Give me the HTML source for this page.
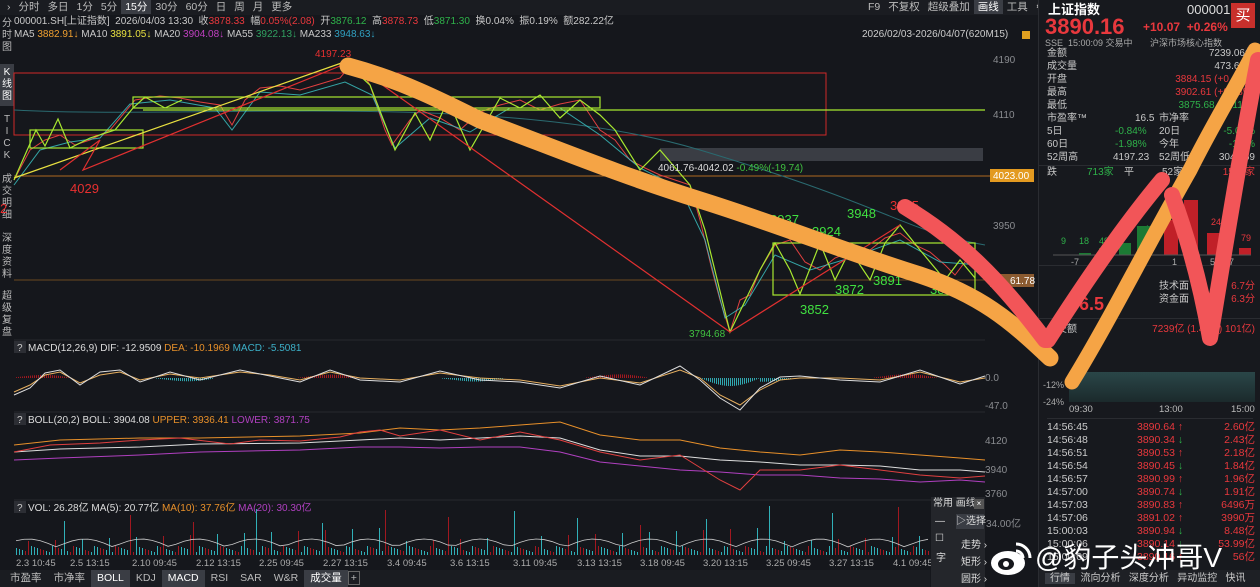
<!DOCTYPE html>
<html><head><meta charset="utf-8"><style>
*{margin:0;padding:0;box-sizing:border-box}
body{width:1260px;height:587px;background:#15171c;font-family:"Liberation Sans","Noto Sans CJK SC",sans-serif;color:#c8c8c8;overflow:hidden;position:relative;font-size:10px}
.a{position:absolute;white-space:nowrap}
.r{color:#e8383d}.g{color:#2fb24a}.w{color:#ddd}
.tab{display:inline-block;padding:0 4px;line-height:14px;font-size:10.5px;color:#bbb}
.side{position:absolute;left:0;width:14px;font-size:10px;line-height:12px;text-align:center;color:#bbb}
.rp{position:absolute;left:1038px;top:0;width:222px;height:587px;background:#17191e;border-left:1px solid #2a2c31}
.row{position:absolute;left:8px;width:210px;font-size:10px;height:13px;line-height:13px}
.row span{position:absolute}
.bt{display:inline-block;padding:0 6px;line-height:17px;font-size:10.5px;color:#bbb}
</style></head><body>
<div class="a" style="left:0;top:0;width:1038px;height:15px;background:#1a1c21"></div>
<div class="a" style="left:3px;top:0"><span class="tab">›</span><span class="tab">分时</span><span class="tab">多日</span><span class="tab">1分</span><span class="tab">5分</span><span class="tab" style="background:#3a3d44;color:#fff">15分</span><span class="tab">30分</span><span class="tab">60分</span><span class="tab">日</span><span class="tab">周</span><span class="tab">月</span><span class="tab">更多</span></div>
<div class="a" style="left:864px;top:0"><span class="tab">F9</span><span class="tab">不复权</span><span class="tab">超级叠加</span><span class="tab" style="background:#3a3d44;color:#fff">画线</span><span class="tab">工具</span><span class="tab">⚙</span><span class="tab">›</span></div>
<div class="a" style="left:14px;top:15px;font-size:10px;line-height:14px">000001.SH[上证指数] &nbsp;2026/04/03 13:30 &nbsp;收<span class="r">3878.33</span> &nbsp;幅<span class="r">0.05%(2.08)</span> &nbsp;开<span class="g">3876.12</span> &nbsp;高<span class="r">3878.73</span> &nbsp;低<span class="g">3871.30</span> &nbsp;换0.04% &nbsp;振0.19% &nbsp;额282.22亿</div>
<div class="a" style="left:14px;top:28px;font-size:10px;line-height:14px">MA5 <span style="color:#f0a030">3882.91↓</span> MA10 <span style="color:#e8e040">3891.05↓</span> MA20 <span style="color:#c040c0">3904.08↓</span> MA55 <span style="color:#30a060">3922.13↓</span> MA233 <span style="color:#30a0c0">3948.63↓</span></div>
<div class="a" style="left:862px;top:28px;font-size:10px;line-height:14px;color:#ccc">2026/02/03-2026/04/07(620M15)</div>
<div class="a" style="left:1022px;top:31px;width:8px;height:8px;background:#e0a020"></div>
<div class="side" style="top:18px">分<br>时<br>图</div>
<div class="side" style="top:64px;background:#3a3d44;color:#fff;height:42px;padding-top:3px">K<br>线<br>图</div>
<div class="side" style="top:114px">T<br>I<br>C<br>K</div>
<div class="side" style="top:174px">成<br>交<br>明<br>细</div>
<div class="side" style="top:233px">深<br>度<br>资<br>料</div>
<div class="side" style="top:291px">超<br>级<br>复<br>盘</div>

<svg class="a" style="left:0;top:0" width="1038" height="587">
<g stroke="#26282e" stroke-width="1">
<line x1="14" y1="340" x2="985" y2="340"/><line x1="14" y1="412" x2="985" y2="412"/><line x1="14" y1="500" x2="985" y2="500"/>
</g>
<g fill="#8a8c90" font-size="10" font-family="Liberation Sans">
<text x="993" y="63">4190</text><text x="993" y="118">4110</text><text x="993" y="229">3950</text>
<text x="985" y="381">0.0</text><text x="985" y="409">-47.0</text>
<text x="985" y="444">4120</text><text x="985" y="473">3940</text><text x="985" y="497">3760</text>
<text x="986" y="527">34.00亿</text>
</g>
<rect x="14" y="73" width="812" height="62" fill="none" stroke="#d02828" stroke-width="1"/>
<rect x="660" y="148" width="323" height="13" fill="#3a3d44"/>
<line x1="14" y1="176" x2="990" y2="176" stroke="#b06a20" stroke-width="1"/>
<line x1="14" y1="280" x2="990" y2="280" stroke="#6a4a20" stroke-width="1"/>
<rect x="990" y="169" width="44" height="13" fill="#e39a20"/>
<text x="993" y="179" fill="#fff" font-size="10" font-family="Liberation Sans">4023.00</text>
<rect x="990" y="274" width="44" height="13" fill="#8a5a30"/>
<text x="1010" y="284" fill="#fff" font-size="10" font-family="Liberation Sans">61.78</text>
<path d="M14,110 C200,120 500,90 700,150 S900,230 985,245" fill="none" stroke="#2a6a70" stroke-width="1"/>
<polyline fill="none" stroke="#e04040" stroke-width="1" points="14,180 30,150 45,140 60,135 75,145 90,140 110,130 120,118 135,100 160,96 180,98 200,102 220,105 232,125 245,100 260,88 280,86 300,90 320,84 340,78 355,60 370,85 385,130 392,145 410,120 420,110 440,118 460,130 480,112 500,105 520,100 540,110 560,104 580,100 590,115 600,130 615,140 630,160 645,168 660,175 675,180 690,185 700,220 712,270 720,300 730,332 740,300 750,295 760,270 775,245 790,240 805,262 820,270 835,258 850,252 870,250 885,238 900,233 915,245 930,252 945,265 955,275 965,262 980,260"/>
<polyline fill="none" stroke="#3cc8c8" stroke-width="1" opacity=".8" points="14,185 40,150 70,142 100,138 130,104 170,100 215,108 232,130 260,92 300,95 345,82 372,95 395,148 430,118 470,132 510,108 560,108 600,135 640,168 680,188 705,240 725,318 745,305 775,255 810,270 850,258 900,240 940,262 980,265"/>
<g fill="none" stroke="#a8e830" stroke-width="1.2">
<rect x="30" y="130" width="113" height="18"/>
<rect x="133" y="97" width="467" height="11"/>
<line x1="143" y1="110" x2="985" y2="110"/>
<rect x="773" y="243" width="202" height="52"/>
<polyline points="14,180 36,130 45,146 58,119 70,148 90,138 115,130 133,108 145,97 165,108 182,100"/>
<polyline points="345,62 370,85 395,150 415,113 430,140 448,100 470,150 500,98 520,108 540,95 560,118 580,100 600,115 615,130 640,170 660,150 690,185 705,230 730,332 760,270 775,243 790,270 800,294 820,243 835,280 850,250 870,280 885,243 900,225 920,250 945,280 960,260 975,278"/>
</g>
<polyline fill="none" stroke="#e8e040" stroke-width="1.2" points="14,178 350,60"/>
<polyline fill="none" stroke="#e03030" stroke-width="1.2" points="60,170 100,140 83,170 350,62 730,332 900,225"/>
<g font-family="Liberation Sans" font-size="13">
<text x="70" y="193" fill="#e83030">4029</text><text x="0" y="213" fill="#e83030">2</text>
<text x="770" y="224" fill="#40e040">3937</text><text x="812" y="236" fill="#40e040">3924</text><text x="847" y="218" fill="#40e040">3948</text>
<text x="835" y="294" fill="#40e040">3872</text><text x="873" y="285" fill="#40e040">3891</text><text x="800" y="314" fill="#40e040">3852</text>
<text x="930" y="294" fill="#40e040">3871</text><text x="890" y="210" fill="#e83030">3955</text>
</g>
<text x="315" y="57" fill="#e83030" font-size="10" font-family="Liberation Sans">4197.23</text>
<text x="689" y="337" fill="#40c040" font-size="10" font-family="Liberation Sans">3794.68</text>
<text x="658" y="171" fill="#ddd" font-size="10" font-family="Liberation Sans">4061.76-4042.02 <tspan fill="#40c040">-0.49%(-19.74)</tspan></text>
<rect x="14" y="341" width="12" height="12" fill="#2c2e34"/><text x="17" y="351" fill="#ccc" font-size="10">?</text>
<text x="28" y="351" font-size="10" font-family="Liberation Sans" fill="#ddd">MACD(12,26,9) DIF: -12.9509 <tspan fill="#e8902a">DEA: -10.1969</tspan> <tspan fill="#3cb0c8">MACD: -5.5081</tspan></text>
<g id="macd"></g>
<polyline fill="none" stroke="#e8b060" stroke-width="1" points="14,392 30,385 45,375 60,372 80,383 100,375 120,372 140,380 170,374 200,378 240,372 270,375 300,380 330,372 360,378 400,380 440,373 480,378 520,380 560,386 600,378 640,383 680,370 700,378 720,395 740,405 760,390 780,380 800,378 840,378 880,380 920,372 960,382 985,378"/>
<polyline fill="none" stroke="#ddd" stroke-width="1" points="14,395 30,388 45,373 60,370 80,385 100,372 120,370 140,382 170,372 200,380 240,370 270,376 300,382 330,370 360,380 400,382 440,371 480,380 520,382 560,388 600,376 640,385 680,366 700,380 720,398 740,410 760,388 780,377 800,376 840,380 880,382 920,370 960,384 985,376"/>
<rect x="14" y="413" width="12" height="12" fill="#2c2e34"/><text x="17" y="423" fill="#ccc" font-size="10">?</text>
<text x="28" y="423" font-size="10" font-family="Liberation Sans" fill="#ddd">BOLL(20,2) BOLL: 3904.08 <tspan fill="#e8902a">UPPER: 3936.41</tspan> <tspan fill="#b040c0">LOWER: 3871.75</tspan></text>
<polyline fill="none" stroke="#e8902a" stroke-width="1" points="14,445 60,440 140,438 200,438 300,436 360,433 400,428 440,430 480,428 520,425 560,422 600,435 640,440 680,440 720,448 760,452 800,455 840,450 880,452 920,455 960,458 985,460"/>
<polyline fill="none" stroke="#ddd" stroke-width="1" points="14,452 60,449 140,447 200,444 300,443 360,440 400,438 440,440 480,438 520,436 560,438 600,450 640,456 680,456 720,460 760,462 800,465 840,465 880,466 920,470 960,470 985,472"/>
<polyline fill="none" stroke="#b040c0" stroke-width="1" points="14,460 60,458 140,455 200,452 300,450 360,447 400,447 440,448 480,447 520,447 560,452 600,462 640,466 680,470 720,472 760,475 800,475 840,478 880,479 920,482 960,480 985,482"/>
<polyline fill="none" stroke="#e04040" stroke-width="1" points="14,452 50,445 100,443 140,440 180,438 230,444 260,440 300,441 340,437 360,432 380,430 400,436 440,430 480,440 520,432 560,440 600,452 640,460 680,455 720,480 740,490 760,470 800,470 840,465 880,470 920,475 960,478 985,476"/>
<rect x="14" y="501" width="12" height="12" fill="#2c2e34"/><text x="17" y="511" fill="#ccc" font-size="10">?</text>
<text x="28" y="511" font-size="10" font-family="Liberation Sans" fill="#ddd">VOL: 26.28亿 MA(5): 20.77亿 <tspan fill="#e8902a">MA(10): 37.76亿</tspan> <tspan fill="#b040c0">MA(20): 30.30亿</tspan></text>
<g id="vol"></g>
<g fill="#aaa" font-size="9.5" font-family="Liberation Sans">
<text x="16" y="566">2.3 10:45</text><text x="70" y="566">2.5 13:15</text><text x="132" y="566">2.10 09:45</text><text x="196" y="566">2.12 13:15</text><text x="259" y="566">2.25 09:45</text><text x="323" y="566">2.27 13:15</text><text x="387" y="566">3.4 09:45</text><text x="450" y="566">3.6 13:15</text><text x="513" y="566">3.11 09:45</text><text x="577" y="566">3.13 13:15</text><text x="640" y="566">3.18 09:45</text><text x="703" y="566">3.20 13:15</text><text x="766" y="566">3.25 09:45</text><text x="829" y="566">3.27 13:15</text><text x="893" y="566">4.1 09:45</text>
</g>
</svg>
<div class="a" style="left:0;top:570px;width:930px;height:17px;background:#1a1c21"></div>
<div class="a" style="left:4px;top:570px"><span class="bt">市盈率</span><span class="bt">市净率</span><span class="bt" style="background:#3a3d44;color:#fff">BOLL</span><span class="bt">KDJ</span><span class="bt" style="background:#3a3d44;color:#fff">MACD</span><span class="bt">RSI</span><span class="bt">SAR</span><span class="bt">W&amp;R</span><span class="bt" style="background:#3a3d44;color:#fff">成交量</span><span class="bt" style="border:1px solid #666;padding:0 2px;line-height:12px">+</span></div>
<div class="a" style="left:931px;top:497px;width:54px;height:90px;background:#24262b;font-size:10px;color:#ddd">
<div style="position:absolute;left:2px;top:0;line-height:14px">常用 画线</div>
<div style="position:absolute;left:43px;top:2px;width:10px;height:10px;background:#555;color:#fff;font-size:8px;text-align:center;line-height:10px">×</div>
<div style="position:absolute;left:25px;top:17px;width:28px;height:15px;background:#3a3d44;line-height:15px">▷选择</div>
<div style="position:absolute;left:4px;top:19px">—</div><div style="position:absolute;left:4px;top:36px">☐</div><div style="position:absolute;left:5px;top:52px">字</div>
<div style="position:absolute;left:30px;top:39px">走势 ›</div><div style="position:absolute;left:30px;top:56px">矩形 ›</div><div style="position:absolute;left:30px;top:73px">圆形 ›</div>
</div>

<div class="rp">
<div class="a" style="left:9px;top:2px;font-size:13px;line-height:16px;font-weight:bold;color:#fff">上证指数</div>
<div class="a" style="left:148px;top:2px;font-size:13px;line-height:16px;color:#ddd">000001</div>
<div class="a" style="left:192px;top:3px;width:24px;height:25px;background:#c8302c;color:#fff;font-size:15px;text-align:center;line-height:25px">买</div>
<div class="a r" style="left:6px;top:16px;font-size:22px;line-height:22px;font-weight:bold">3890.16</div>
<div class="a r" style="left:104px;top:20px;font-size:12px;line-height:14px;font-weight:bold">+10.07 &nbsp;+0.26%</div>
<div class="a" style="left:6px;top:38px;font-size:9px;line-height:10px;color:#aaa">SSE &nbsp;15:00:09 交易中 &nbsp; &nbsp; &nbsp; 沪深市场核心指数</div>
<div class="row" style="top:47px"><span>金额</span><span style="right:2px">7239.06亿</span></div>
<div class="row" style="top:60px"><span>成交量</span><span style="right:2px">473.62亿</span></div>
<div class="row" style="top:73px"><span>开盘</span><span class="r" style="right:2px">3884.15 (+0.10%)</span></div>
<div class="row" style="top:86px"><span>最高</span><span class="r" style="right:2px">3902.61 (+0.58%)</span></div>
<div class="row" style="top:99px"><span>最低</span><span class="g" style="right:2px">3875.68 (-0.11%)</span></div>
<div class="row" style="top:112px"><span>市盈率™</span><span style="left:88px">16.5</span><span style="left:112px">市净率</span><span style="right:2px">1.5</span></div>
<div class="row" style="top:125px"><span>5日</span><span class="g" style="left:68px">-0.84%</span><span style="left:112px">20日</span><span class="g" style="right:2px">-5.00%</span></div>
<div class="row" style="top:138px"><span>60日</span><span class="g" style="left:68px">-1.98%</span><span style="left:112px">今年</span><span class="g" style="right:2px">-1.9%</span></div>
<div class="row" style="top:151px"><span>52周高</span><span style="left:66px">4197.23</span><span style="left:112px">52周低</span><span style="right:2px">3040.69</span></div>
<div class="a" style="left:0;top:165px;width:222px;height:1px;background:#2a2c31"></div>
<div class="row" style="top:166px"><span>跌</span><span class="g" style="left:40px">713家</span><span style="left:77px">平</span><span style="left:115px">52家</span><span class="r" style="right:2px">1500家</span></div>
<svg class="a" style="left:0;top:180px" width="222" height="90">
<g font-size="9" font-family="Liberation Sans" fill="#2fb24a"><text x="22" y="64">9</text><text x="40" y="64">18</text><text x="60" y="64">49</text><text x="80" y="60">2</text><text x="105" y="52">42</text></g>
<g fill="#1c7a34"><rect x="40" y="73" width="12" height="2"/><rect x="60" y="68" width="12" height="7"/><rect x="80" y="63" width="12" height="12"/><rect x="98" y="46" width="14" height="29"/></g>
<g fill="#c02028"><rect x="125" y="40" width="14" height="35"/><rect x="145" y="20" width="14" height="55"/><rect x="168" y="53" width="14" height="22"/><rect x="200" y="68" width="12" height="7"/></g>
<g font-size="9" font-family="Liberation Sans" fill="#e8383d"><text x="120" y="35">48</text><text x="172" y="45">249</text><text x="202" y="61">79</text></g>
<line x1="14" y1="75" x2="212" y2="75" stroke="#555"/>
<g font-size="9" fill="#aaa"><text x="32" y="85">-7</text><text x="93" y="85">-1</text><text x="133" y="85">1</text><text x="171" y="85">5</text><text x="190" y="85">7</text></g>
</svg>
<div class="a" style="left:0;top:265px;width:222px;height:1px;background:#2a2c31"></div>
<div class="row" style="top:280px"><span style="left:112px">技术面</span><span class="r" style="right:2px">6.7分</span></div>
<div class="row" style="top:293px"><span style="left:112px">资金面</span><span class="r" style="right:2px">6.3分</span></div>
<div class="a r" style="left:40px;top:294px;font-size:18px;font-weight:bold">6.5</div>
<div class="a" style="left:0;top:318px;width:222px;height:1px;background:#2a2c31"></div>
<div class="row" style="top:323px"><span>成交额</span><span class="r" style="right:2px">7239亿 (1.41%) 101亿)</span></div>
<div class="a" style="left:30px;top:372px;width:186px;height:30px;background:linear-gradient(#2a4648,#1b2a2c)"></div>
<div class="a" style="left:4px;top:380px;font-size:9px;color:#aaa">-12%</div><div class="a" style="left:4px;top:397px;font-size:9px;color:#aaa">-24%</div>
<div class="a" style="left:30px;top:404px;font-size:9.5px;color:#bbb">09:30</div><div class="a" style="left:120px;top:404px;font-size:9.5px;color:#bbb">13:00</div><div class="a" style="left:192px;top:404px;font-size:9.5px;color:#bbb">15:00</div>
<div class="a" style="left:8px;top:418px;width:206px;height:1px;background:#2a2c31"></div>
<div id="ticks"></div>
<div class="a" style="left:0;top:570px;width:222px;height:17px;background:#1e2025;font-size:10px;line-height:17px;color:#ccc"><span style="background:#3a3d44;padding:0 5px;margin-left:6px">行情</span> &nbsp;流向分析 &nbsp; 深度分析 &nbsp; 异动监控 &nbsp; 快讯</div>
</div>

<svg class="a" style="left:0;top:0" width="1260" height="587">
<g fill="none" stroke-linecap="round" stroke-linejoin="round">
<path d="M348,66 C400,80 440,100 480,120 C560,150 620,175 700,200 C780,225 840,250 920,275 C980,295 1010,320 1050,358" stroke="#f5a445" stroke-width="17"/>
<path d="M1072,382 C1110,320 1150,240 1190,170 C1215,120 1240,80 1255,50" stroke="#f5a445" stroke-width="15"/>
<path d="M905,207 C960,240 1000,280 1045,340 L1048,340 C1080,290 1120,230 1162,180" stroke="#f25558" stroke-width="16"/>
<path d="M1172,195 C1185,230 1200,280 1210,338 C1220,280 1235,180 1258,60" stroke="#f25558" stroke-width="16"/>
</g>
<g transform="translate(1008,558)">
<ellipse cx="0" cy="5" rx="17" ry="12" fill="#fff"/>
<ellipse cx="-2" cy="6" rx="8" ry="6" fill="#15171c"/>
<circle cx="-2" cy="6" r="3" fill="#fff"/>
<path d="M8,-14 A14,14 0 0 1 22,0" stroke="#fff" stroke-width="3" fill="none"/>
<path d="M8,-7 A7,7 0 0 1 15,0" stroke="#fff" stroke-width="3" fill="none"/>
</g>
</svg>
<div class="a" style="left:1035px;top:536px;font-size:28px;color:#fff;font-family:'Liberation Sans','Noto Sans CJK SC',sans-serif">@豹子头冲哥V</div>
<script>
var v=document.getElementById('vol'),s='';
for(var x=16;x<930;x+=3){var h=3+((x*37)%7);if(x%27<3)h=14+((x*13)%14);if(x%64<3)h=30+((x*11)%20);var c=(x*7)%5<2?'#a01820':'#30b0b8';s+='<rect x="'+x+'" y="'+(555-h)+'" width="1" height="'+h+'" fill="'+c+'"/>';}
v.innerHTML=s+'<polyline fill="none" stroke="#ccc" stroke-width="0.8" points="'+(function(){var p='';for(var x=16;x<930;x+=8){p+=x+','+(547-Math.abs(Math.sin(x/18))*8)+' ';}return p;})()+'"/>';
var m=document.getElementById('macd'),t='';
for(var x=16;x<985;x+=2){var p=Math.sin(x/45)*4*Math.max(0,Math.sin(x/23));if(x>700&&x<760)p=-Math.sin((x-700)/19)*8;var c=p>0?'#a01820':'#30a8b0';var h=Math.abs(p);if(h<0.5)continue;t+='<rect x="'+x+'" y="'+(p>0?378-h:378)+'" width="1" height="'+h+'" fill="'+c+'"/>';}
m.innerHTML=t;
var d=[["14:56:45","3890.64",1,"2.60亿"],["14:56:48","3890.34",0,"2.43亿"],["14:56:51","3890.53",1,"2.18亿"],["14:56:54","3890.45",0,"1.84亿"],["14:56:57","3890.99",1,"1.96亿"],["14:57:00","3890.74",0,"1.91亿"],["14:57:03","3890.83",1,"6496万"],["14:57:06","3891.02",1,"3990万"],["15:00:03","3890.94",0,"8.48亿"],["15:00:06","3890.14",0,"53.99亿"],["15:00:09","3890.16",1,"56亿"]],h='';
for(var i=0;i<d.length;i++){h+='<div class="row" style="top:'+(421+i*13)+'px;font-size:10.5px"><span style="color:#ccc">'+d[i][0]+'</span><span class="r" style="left:90px">'+d[i][1]+' <b style="color:'+(d[i][2]?'#e8383d':'#2fb24a')+'">'+(d[i][2]?'↑':'↓')+'</b></span><span class="r" style="right:2px">'+d[i][3]+'</span></div>';}
document.getElementById('ticks').innerHTML=h;
</script>
</body></html>
